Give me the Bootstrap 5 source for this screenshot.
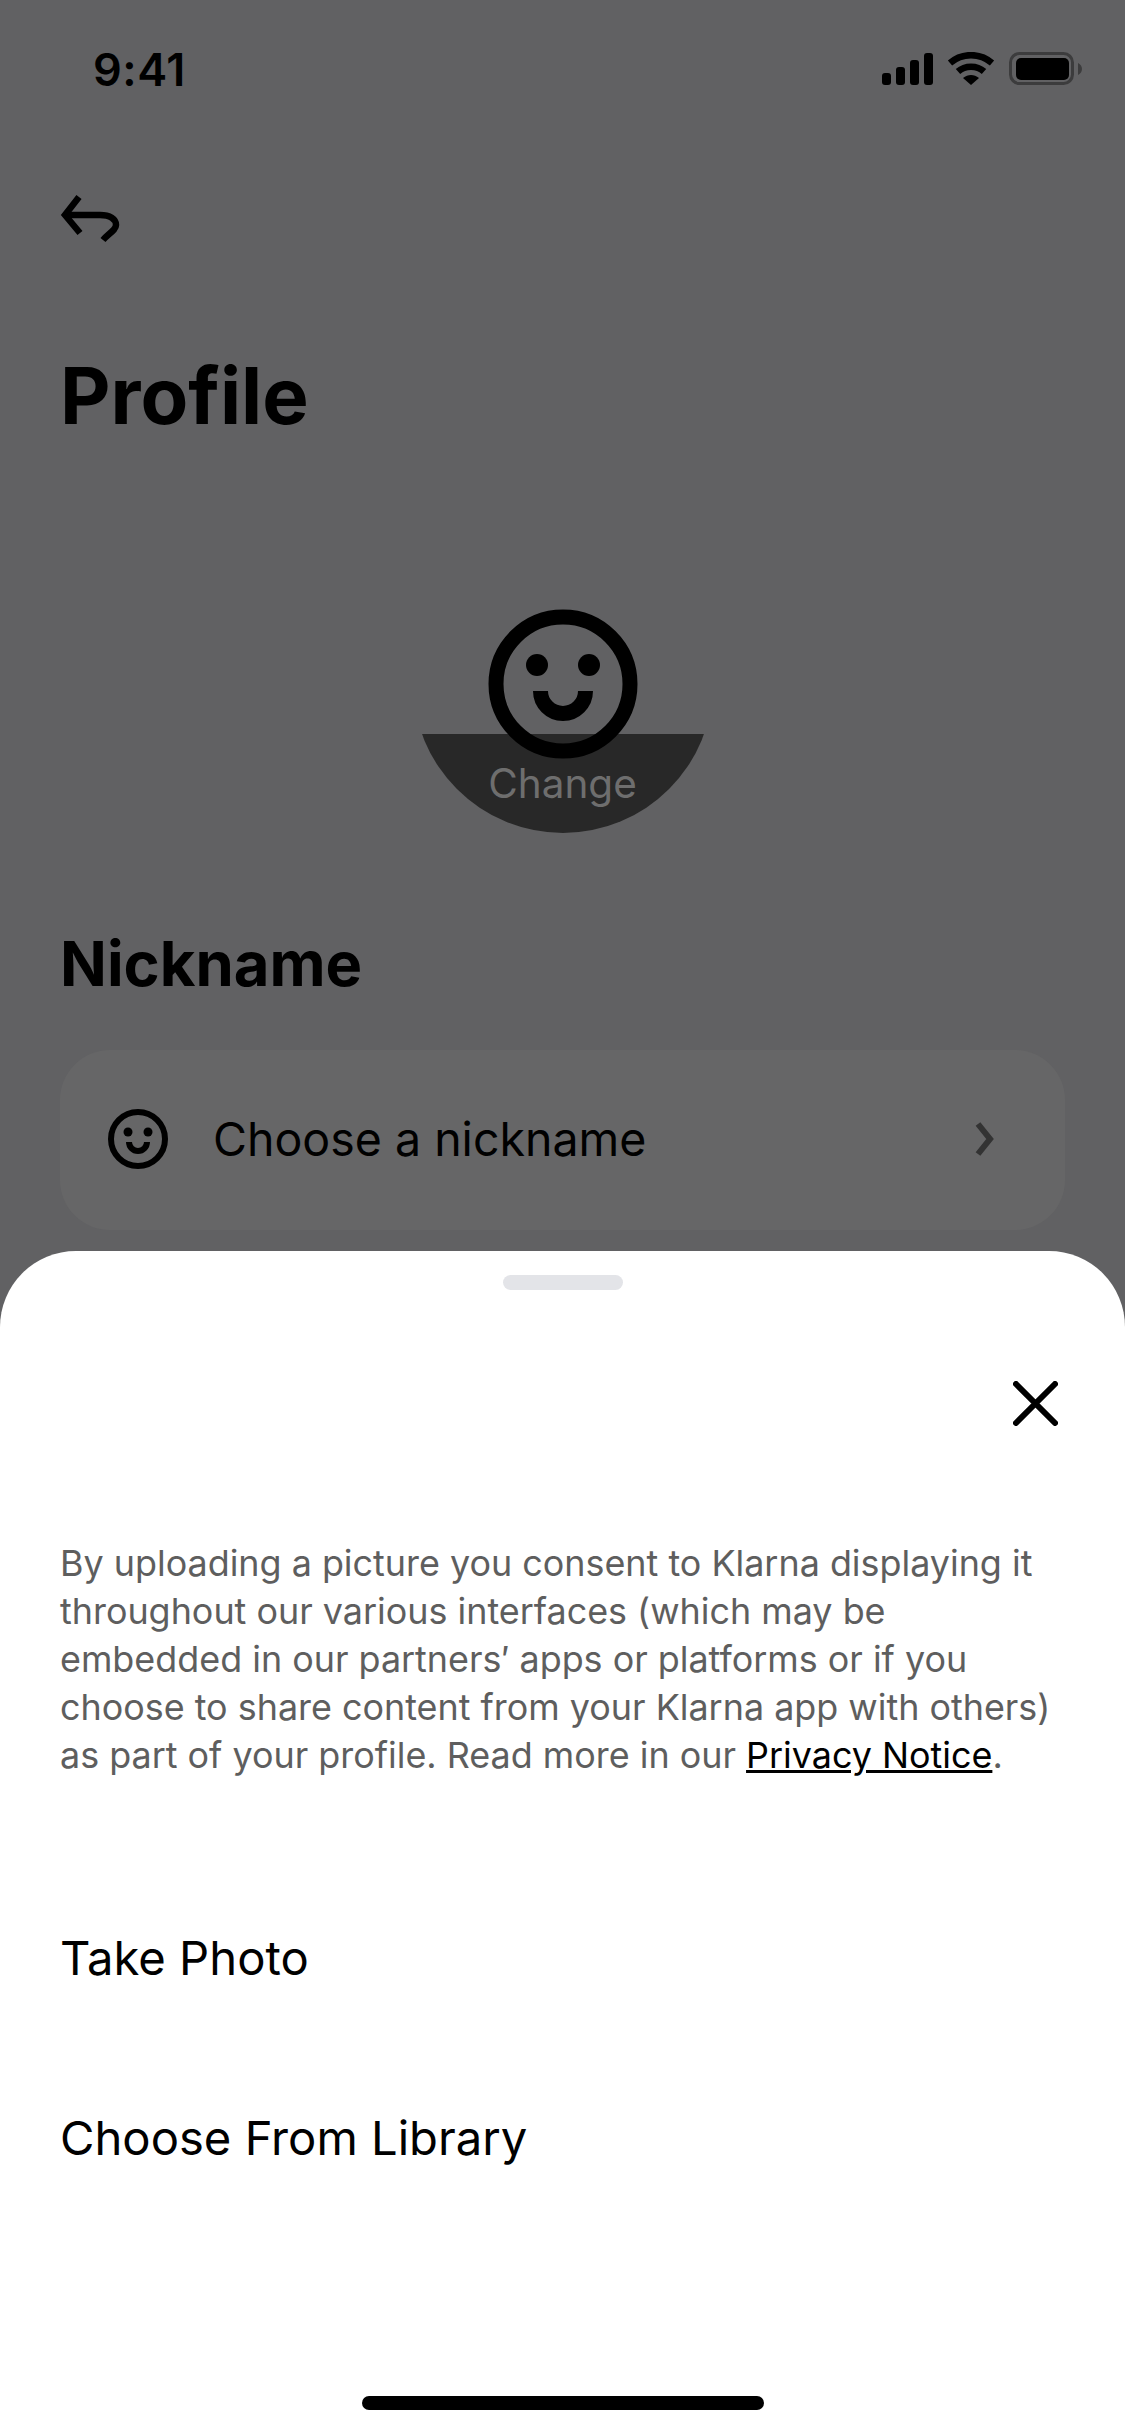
<!DOCTYPE html>
<html lang="en">
<head>
  <meta charset="UTF-8" />
  <meta name="viewport" content="width=device-width, initial-scale=1" />
  <title>Profile</title>
  <link href="https://cdn.jsdelivr.net/npm/bootstrap@5.3.3/dist/css/bootstrap.min.css" rel="stylesheet" />
  <style>
    html, body { height: 2436px; overflow: hidden; }
    body {
      background-color: #616163;
      color: #000;
      font-family: Inter, "Liberation Sans", sans-serif;
    }
    .screen { width: 1125px; height: 2436px; }
    .status-row { height: 138px; padding: 0 43px 0 93px; }
    .status-time { font-size: 45px; font-weight: 600; line-height: 1; letter-spacing: .5px; }
    .back-row { height: 164px; padding-left: 60px; }
    .page-title { font-size: 78px; font-weight: 700; line-height: 1; margin: 0; padding: 55px 60px 0; height: 231px; }
    .avatar-wrap { height: 300px; }
    .avatar-disc { width: 300px; height: 300px; border-radius: 50%; overflow: hidden; position: relative; }
    .avatar-band { position: absolute; left: 0; right: 0; top: 201px; bottom: 0; background: #282828; }
    .avatar-label { position: absolute; left: 0; right: 0; top: 227px; text-align: center; font-size: 40.500px; line-height: 1.2; color: #6e6e6e; }
    .avatar-face { position: absolute; left: 75px; top: 76px; }
    .nick-title { font-size: 61.500px; font-weight: 700; line-height: 1; margin: 0; padding: 100px 60px 0; height: 217px; }
    .nick-row { margin: 0 60px; height: 180px; padding: 0 70px 2px 48px; background: #666667; border-radius: 50px; font-size: 46.500px; line-height: 1; }
    .nick-icon { margin-right: 45px; }
    .sheet { margin-top: 21px; background: #fff; height: 1185px; border-radius: 76px 76px 0 0; padding-top: 24px; }
    .sheet-handle { width: 120px; height: 15px; background: #e3e4e8; border-radius: 8px; }
    .close-row { padding: 91px 67px 0 0; height: 214px; }
    .legal { margin: 35px 0 89px; padding: 0 60px; font-size: 35.900px; line-height: 48px; color: #5e5e5e; }
    .legal a { color: #000; }
    .sheet-action { font-size: 47.200px; line-height: 1; padding: 0 60px; height: 180px; display: flex; align-items: center; }
    .home-bar { width: 402px; height: 14px; background: #000; border-radius: 7px; margin-bottom: 26px; }
  </style>
</head>
<body>
  <div class="screen d-flex flex-column">
    <div class="status-row d-flex justify-content-between align-items-center">
      <span class="status-time">9:41</span>
      <svg width="200" height="34" viewBox="882 52 200 34">
        <rect x="882" y="73" width="9" height="12" rx="3"/>
        <rect x="896" y="67" width="9" height="18" rx="3"/>
        <rect x="910" y="60" width="9" height="25" rx="3"/>
        <rect x="924" y="53" width="9" height="32" rx="3"/>
        <path d="M950 63C962 52.500 980 52.500 992 63" fill="none" stroke="#000" stroke-width="6.500"/>
        <path d="M958 71.500C965 65 977 65 984 71.500" fill="none" stroke="#000" stroke-width="6.500"/>
        <path d="M971 85L963 78C968 74 974 74 979 78Z"/>
        <rect x="1010.500" y="53.500" width="62" height="30" rx="9" fill="none" stroke="#3c3c3d" stroke-width="3"/>
        <rect x="1016" y="58" width="53" height="22" rx="5"/>
        <path d="M1078 63C1080 64 1082 66 1082 69C1082 72 1080 74 1078 75Z" fill="#3c3c3d"/>
      </svg>
    </div>
    <div class="back-row d-flex align-items-center">
      <svg width="62" height="50" viewBox="0 0 62 50" fill="none" stroke="#000" stroke-width="6.500">
        <path d="M19 2L5 20L20 38"/>
        <path d="M5 20H40C50 20 56 24 56 30C56 35 48 39 43 45"/>
      </svg>
    </div>
    <h1 class="page-title">Profile</h1>
    <div class="avatar-wrap d-flex justify-content-center">
      <div class="avatar-disc">
        <div class="avatar-band"></div>
        <svg class="avatar-face" width="150" height="150" viewBox="0 0 150 150" fill="none">
          <circle cx="75" cy="75" r="67" stroke="#000" stroke-width="15"/>
          <circle cx="49" cy="56" r="11" fill="#000"/>
          <circle cx="101" cy="56" r="11" fill="#000"/>
          <path d="M52.500 82A22.500 22.500 0 0 0 97.500 82" stroke="#000" stroke-width="15"/>
        </svg>
        <div class="avatar-label">Change</div>
      </div>
    </div>
    <h2 class="nick-title">Nickname</h2>
    <div class="nick-row d-flex align-items-center">
      <svg width="60" height="60" viewBox="0 0 60 60" fill="none" class="nick-icon">
        <circle cx="30" cy="30" r="27" stroke="#000" stroke-width="6"/>
        <circle cx="20" cy="23" r="4.500" fill="#000"/>
        <circle cx="40" cy="23" r="4.500" fill="#000"/>
        <path d="M21 33A9 9 0 0 0 39 33" stroke="#000" stroke-width="6"/>
      </svg>
      <span class="flex-grow-1">Choose a nickname</span>
      <svg width="20" height="34" viewBox="0 0 20 34" fill="none" stroke="#333" stroke-width="6">
        <path d="M3 2L15 17L3 32"/>
      </svg>
    </div>
    <div class="sheet d-flex flex-column">
      <div class="sheet-handle align-self-center"></div>
      <div class="close-row d-flex justify-content-end">
        <svg width="45" height="45" viewBox="0 0 45 45" stroke="#000" stroke-width="6" stroke-linecap="round">
          <path d="M3 3L42 42M42 3L3 42"/>
        </svg>
      </div>
      <p class="legal">By uploading a picture you consent to Klarna displaying it throughout our various interfaces (which may be embedded in our partners&#x2032; apps or platforms or if you choose to share content from your Klarna app with others) as part of your profile. Read more in our <a href="#">Privacy Notice</a>.</p>
      <div class="sheet-action">Take Photo</div>
      <div class="sheet-action">Choose From Library</div>
      <div class="home-bar align-self-center mt-auto"></div>
    </div>
  </div>
</body>
</html>
